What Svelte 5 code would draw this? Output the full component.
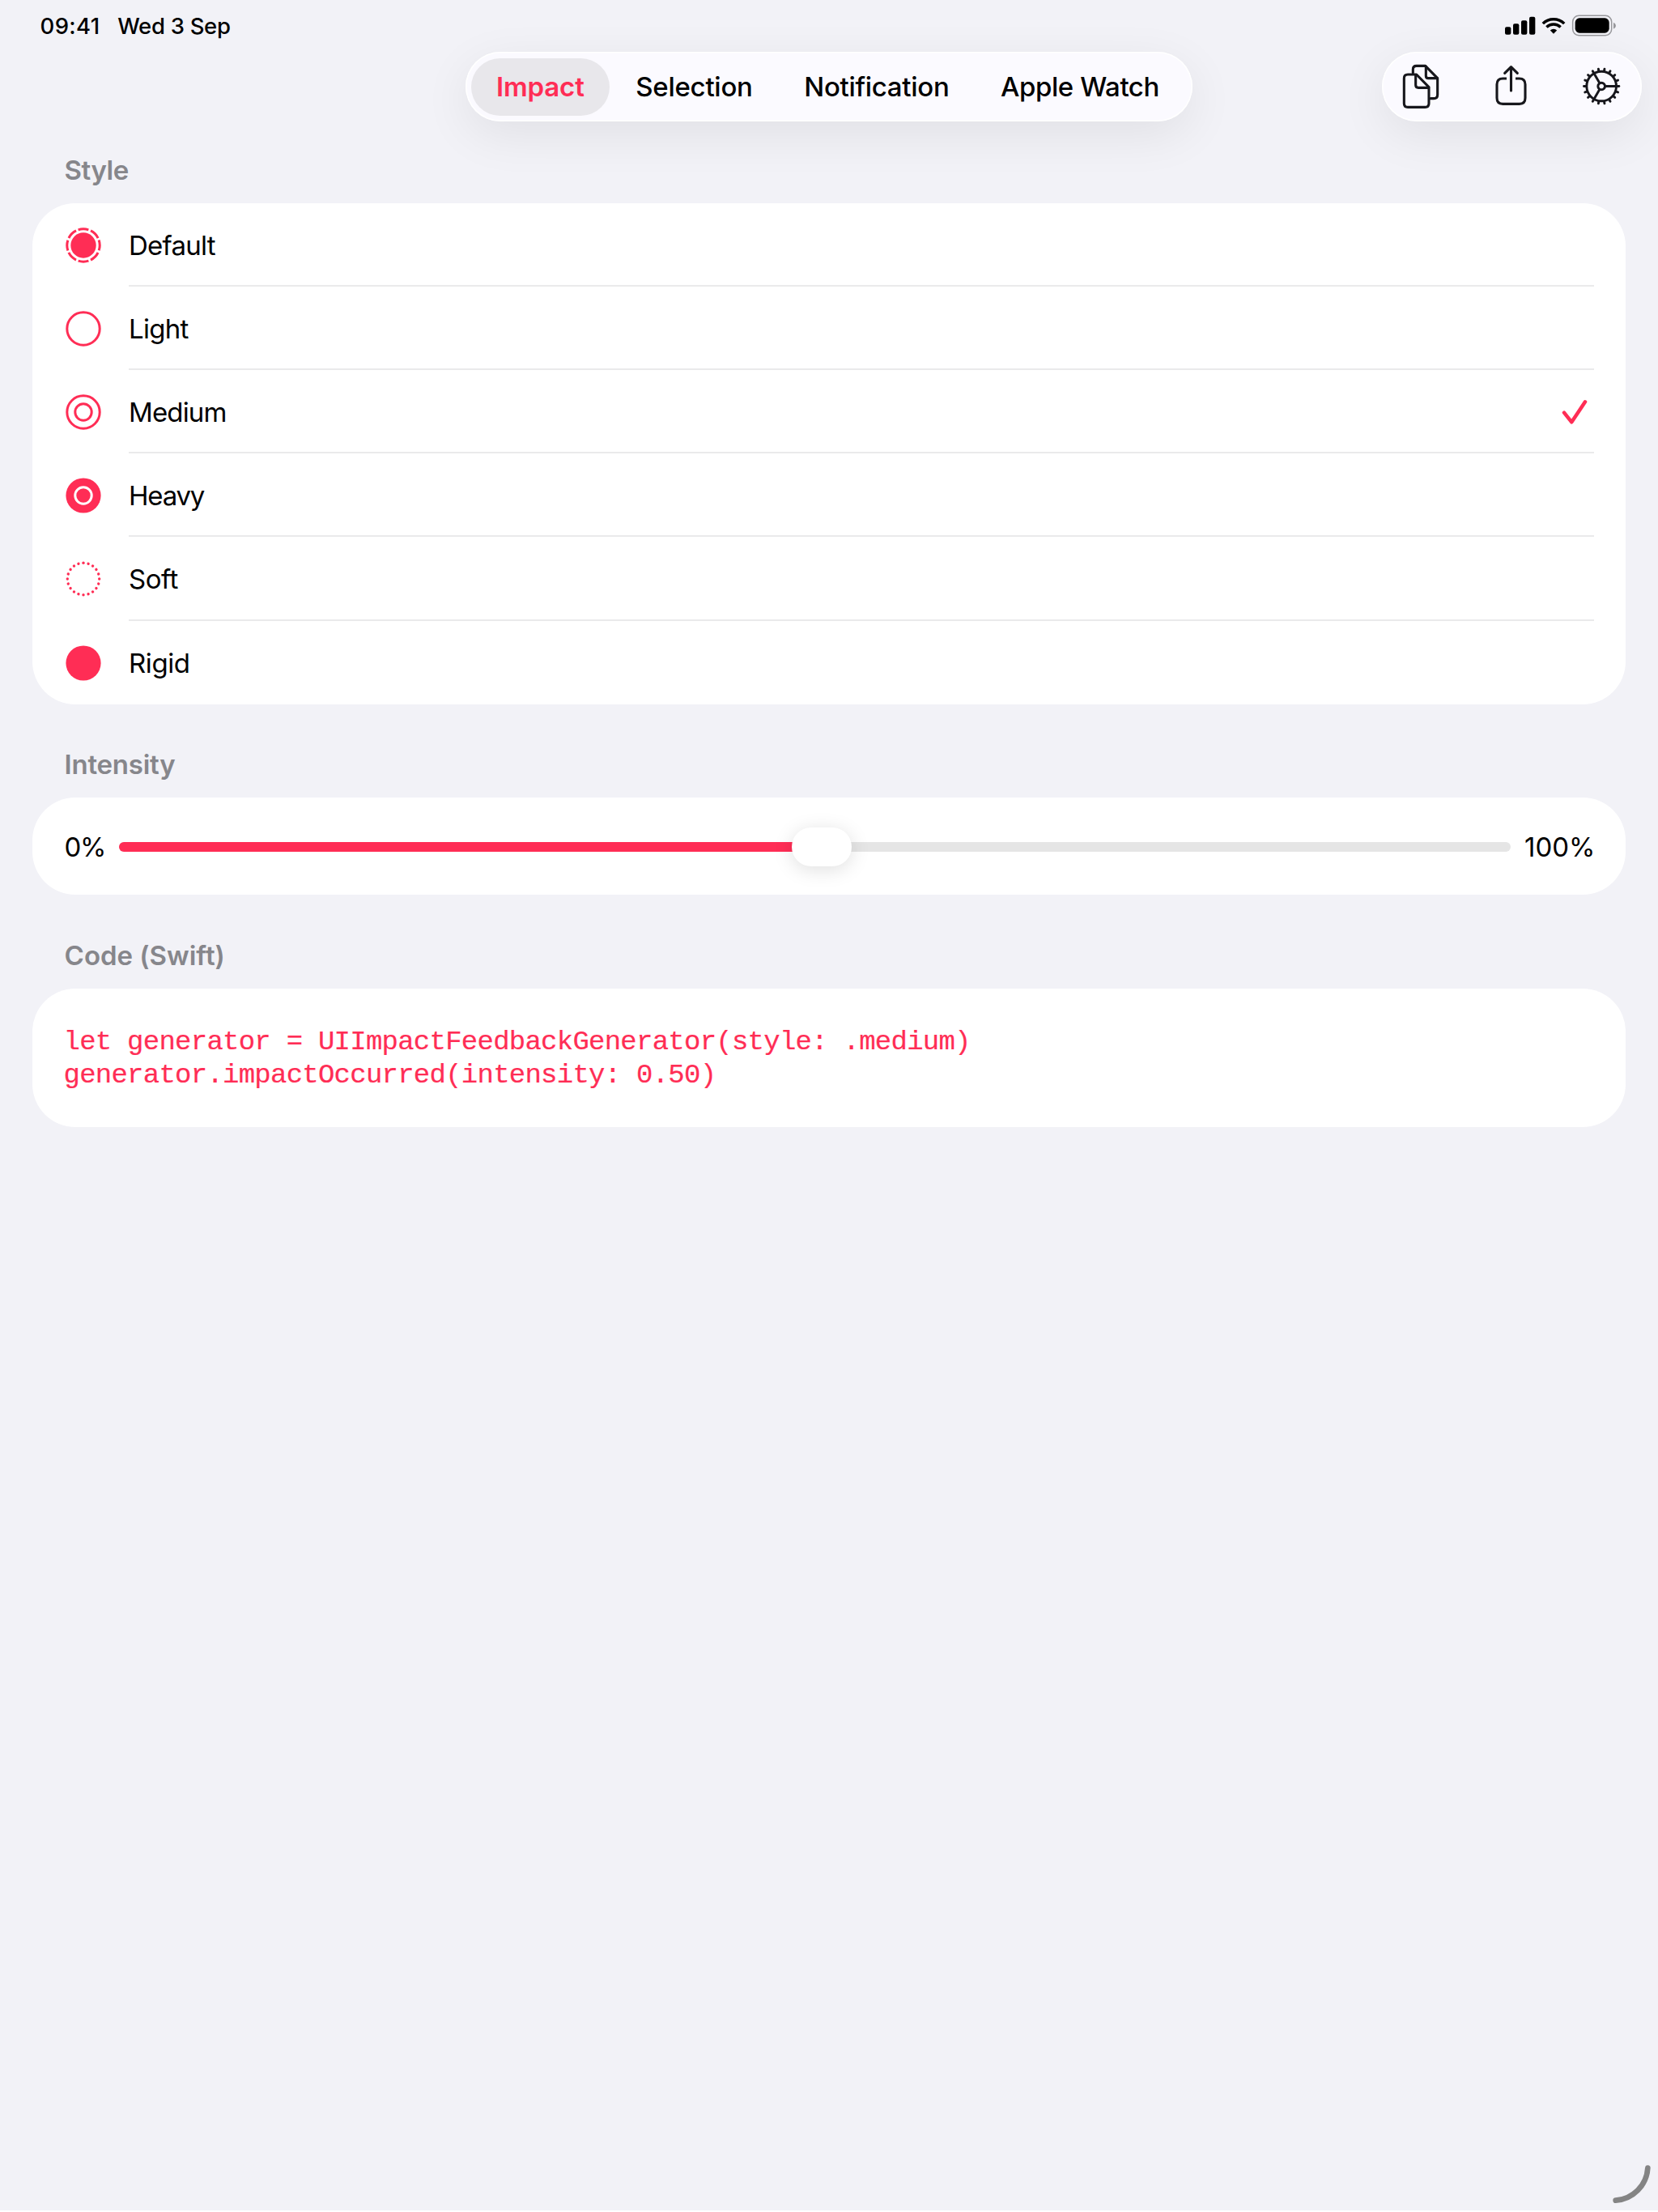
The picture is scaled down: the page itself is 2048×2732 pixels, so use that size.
<script>
  const tabs = [
    { label: 'Impact', key: 'impact' },
    { label: 'Selection', key: 'selection' },
    { label: 'Notification', key: 'notification' },
    { label: 'Apple Watch', key: 'watch' }
  ];
  const styles = ['Default', 'Light', 'Medium', 'Heavy', 'Soft', 'Rigid'];

  let activeTab = $state('impact');
  let selected = $state('Medium');
  let position = $state(50.5);

  const dots = Array.from({ length: 20 }, (_, i) => i * 18);
  const teeth = Array.from({ length: 18 }, (_, i) => i * 20);
  const spokes = [0, 120, 240];
</script>

<div class="screen">
  <header class="status">
    <div class="clock">
      <span class="time">09:41</span>
      <span class="date">Wed 3 Sep</span>
    </div>
    <svg class="indicators" viewBox="504 54 420 84" aria-hidden="true">
      <rect x="507" y="100" width="22" height="28" rx="6" />
      <rect x="537" y="88" width="22" height="40" rx="6" />
      <rect x="567" y="76" width="22" height="52" rx="6" />
      <rect x="597" y="62" width="22" height="66" rx="6" />
      <g class="waves">
        <path d="M647.4 87.4A56 56 0 0 1 726.6 87.4" />
        <path d="M661.2 100.3A37 37 0 0 1 712.8 100.3" />
      </g>
      <path d="M687 125L674.5 112.5A18 18 0 0 1 699.5 112.5Z" />
      <rect class="shell" x="758" y="58" width="144" height="73" rx="23" />
      <rect x="767" y="67" width="126" height="55" rx="16" />
      <path class="nub" d="M909 83Q918 87 918 95T909 107Z" />
    </svg>
  </header>

  <nav class="bar">
    <div class="tabs">
      {#each tabs as tab}
        <button class="tab {tab.key}" class:active={activeTab === tab.key} onclick={() => (activeTab = tab.key)}>{tab.label}</button>
      {/each}
    </div>
    <div class="tools">
      <svg class="docs" viewBox="127 234 141 171" aria-label="Copy">
        <path d="M148 276H180L226 323V383Q226 397 212 397H148Q134 397 134 383V290Q134 276 148 276Z" />
        <path d="M177 278V315Q177 325 187 325H225" />
        <path d="M167 270V257Q167 244 180 244H213L258 290V351Q258 365 244 365H232" />
        <path d="M215 246V281Q215 290 224 290H257" />
      </svg>
      <svg class="share" viewBox="468 240 123 153" aria-label="Share">
        <path class="flat" d="M513 291H499Q477 291 477 313V363Q477 385 499 385H560Q582 385 582 363V313Q582 291 560 291H546" />
        <path d="M529.5 250V336M506 271L529.5 248L553 271" />
      </svg>
      <svg class="gear" viewBox="792 246 147 147" aria-label="Settings">
        <g transform="translate(864.5 319.5)">
          <circle r="55" />
          <circle r="13" />
          {#each spokes as a}
            <path d="M15 0H54" transform="rotate({a})" />
          {/each}
          {#each teeth as a}
            <path d="M58 0H65" transform="rotate({a})" />
          {/each}
        </g>
      </svg>
    </div>
  </nav>

  <main>
    <section>
      <h2 class="h-style">Style</h2>
      <div class="card">
        {#each styles as name}
          <div class="row" role="button" tabindex="-1" onclick={() => (selected = name)} onkeydown={() => {}}>
            <svg class="mark" viewBox="-22 -22 44 44" aria-hidden="true">
              {#if name === 'Default'}
                <circle class="dashes" r="20.2" pathLength="80" transform="rotate(-108.5)" />
                <circle class="solid" r="15.7" />
              {:else if name === 'Light'}
                <circle r="20.2" />
              {:else if name === 'Medium'}
                <circle r="20.2" />
                <circle r="10.2" />
              {:else if name === 'Heavy'}
                <circle class="solid" r="21.6" />
                <circle class="cut" r="10.2" />
              {:else if name === 'Soft'}
                {#each dots as a}
                  <circle class="solid" cx="19.7" r="1.7" transform="rotate({a})" />
                {/each}
              {:else}
                <circle class="solid" r="21.6" />
              {/if}
            </svg>
            <div class="cell">
              <span class="label {name.toLowerCase()}">{name}</span>
              {#if selected === name}
                <svg class="check" viewBox="147 160 96 96" aria-hidden="true">
                  <path d="M156 210L184 245L234 170" />
                </svg>
              {/if}
            </div>
          </div>
        {/each}
      </div>
    </section>

    <section>
      <h2 class="h-intensity">Intensity</h2>
      <div class="card slider">
        <span class="min">0%</span>
        <div class="track">
          <div class="fill" style="width: {position}%"></div>
          <div class="thumb" style="left: {position}%"></div>
        </div>
        <span class="max">100%</span>
      </div>
    </section>

    <section>
      <h2 class="h-code">Code (Swift)</h2>
      <pre class="card code">let generator = UIImpactFeedbackGenerator(style: .medium)
generator.impactOccurred(intensity: 0.50)</pre>
    </section>
  </main>

  <svg class="grip" viewBox="70 63 147 147" aria-hidden="true">
    <path d="M203 77A128 128 0 0 1 84 197" />
  </svg>
</div>

<style>
  :global(body) {
    background: #fff;
  }

  .screen {
    --pink: #ff2d55;
    position: relative;
    box-sizing: border-box;
    width: 2048px;
    height: 2730px;
    background: #f2f2f7;
    color: #000;
    font-family: Inter, 'Liberation Sans', sans-serif;
    font-size: 33px;
    line-height: 40px;
  }

  svg {
    display: block;
    flex: none;
  }

  .status {
    display: flex;
    align-items: center;
    justify-content: space-between;
    height: 64px;
    padding: 0 50px 0 49.5px;
    font-size: 27.5px;
    font-weight: 500;
  }
  .clock {
    display: flex;
    gap: 21.5px;
  }
  .time { letter-spacing: 0.4px; }
  .date { letter-spacing: -0.3px; }

  .indicators {
    width: 140px;
    height: 28px;
  }
  .waves {
    fill: none;
    stroke: #000;
    stroke-width: 10.5;
  }
  .shell {
    fill: none;
    stroke: #97979b;
    stroke-width: 4.5;
  }
  .nub { fill: #97979b; }

  .bar {
    display: grid;
    grid-template-columns: 1fr 898px 1fr;
    align-items: center;
    height: 86px;
    padding-right: 20px;
    padding-left: 20px;
  }
  .tabs,
  .tools {
    display: flex;
    align-items: center;
    box-sizing: border-box;
    height: 86px;
    border-radius: 43px;
    background: #fbfaff;
    box-shadow: inset 0 0 0 1.5px #fff, 0 16px 60px rgba(0, 0, 0, 0.075);
  }
  .tabs {
    grid-column: 2;
    gap: 1.6px;
    padding: 0 7px;
  }
  .tab {
    height: 71px;
    padding: 0 31px;
    border: 0;
    border-radius: 36px;
    background: none;
    color: #000;
    font: inherit;
    font-weight: 500;
    white-space: nowrap;
  }
  .tab.active {
    background: #e8e7eb;
    color: var(--pink);
    font-weight: 600;
  }
  .impact { letter-spacing: -0.15px; }
  .selection { letter-spacing: -0.27px; }
  .notification { letter-spacing: -0.3px; }
  .watch { letter-spacing: -0.43px; }

  .tools {
    justify-self: end;
    justify-content: space-between;
    width: 321px;
    padding: 0 25px;
  }
  .tools svg {
    fill: none;
    stroke: #17171c;
    stroke-width: 9.3;
    stroke-linecap: round;
    stroke-linejoin: round;
  }
  .docs {
    width: 47px;
    height: 57px;
    margin-bottom: 1px;
  }
  .share {
    width: 41px;
    height: 51px;
    margin-bottom: 3px;
  }
  .tools .flat { stroke-linecap: butt; }
  .tools .gear {
    width: 49px;
    height: 49px;
    margin-bottom: 1px;
    stroke-width: 8.8;
  }

  main { padding: 0 40px; }
  h2 {
    margin: 0;
    padding: 54.5px 39.6px 20.6px;
    color: #86868b;
    font-size: 33px;
    font-weight: 600;
    line-height: 40px;
  }
  .h-style {
    padding-top: 40px;
    letter-spacing: -0.45px;
  }
  .h-intensity { letter-spacing: -0.24px; }
  .h-code { letter-spacing: -0.02px; }

  .card {
    box-sizing: border-box;
    border-radius: 53px;
    background: #fff;
  }

  .row {
    display: flex;
    align-items: center;
    gap: 34.3px;
    height: 103.2px;
    padding: 0 39px 0 40.7px;
  }
  .mark {
    width: 44px;
    height: 44px;
    margin-top: 1px;
  }
  .mark circle {
    fill: none;
    stroke: var(--pink);
    stroke-width: 3;
  }
  .mark .solid {
    fill: var(--pink);
    stroke: none;
  }
  .mark .cut { stroke: #fff; }
  .mark .dashes { stroke-dasharray: 8.2 1.8; }

  .cell {
    display: flex;
    flex: 1;
    align-items: center;
    justify-content: space-between;
    box-sizing: border-box;
    height: 100%;
    padding: 3px 8px 0 0;
    border-bottom: 2px solid #eaeaeb;
  }
  .row:last-child .cell { border-bottom-color: transparent; }
  .check {
    width: 32px;
    height: 32px;
    fill: none;
    stroke: var(--pink);
    stroke-width: 13.5;
    stroke-linecap: round;
    stroke-linejoin: round;
  }
  .default { letter-spacing: -0.75px; }
  .light { letter-spacing: -0.7px; }
  .medium { letter-spacing: -0.86px; }
  .heavy { letter-spacing: -1.2px; }
  .soft { letter-spacing: -0.5px; }
  .rigid { letter-spacing: -0.4px; }

  .slider {
    display: flex;
    align-items: center;
    height: 120.6px;
    padding: 1px 37.5px 0 39.5px;
  }
  .min {
    width: 67.5px;
    letter-spacing: -1.3px;
  }
  .track {
    position: relative;
    flex: 1;
    height: 12px;
    border-radius: 6px;
    background: #e5e5e5;
  }
  .fill {
    height: 100%;
    border-radius: 6px 0 0 6px;
    background: var(--pink);
  }
  .thumb {
    position: absolute;
    top: 50%;
    width: 74px;
    height: 48px;
    border-radius: 24px;
    background: #fff;
    box-shadow: 0 4px 24px rgba(0, 0, 0, 0.13);
    transform: translate(-50%, -50%);
  }
  .max { margin-left: 17px; }

  .code {
    height: 171px;
    margin: 0;
    padding: 46px 38.5px 0;
    color: var(--pink);
    font-family: 'Liberation Mono', monospace;
    font-size: 34px;
    line-height: 41.8px;
    letter-spacing: -0.75px;
    -webkit-text-stroke: 0.2px var(--pink);
  }

  .grip {
    position: absolute;
    right: 8px;
    bottom: 8px;
    width: 49px;
    height: 49px;
    fill: none;
    stroke: #848484;
    stroke-width: 20;
    stroke-linecap: round;
  }
</style>
